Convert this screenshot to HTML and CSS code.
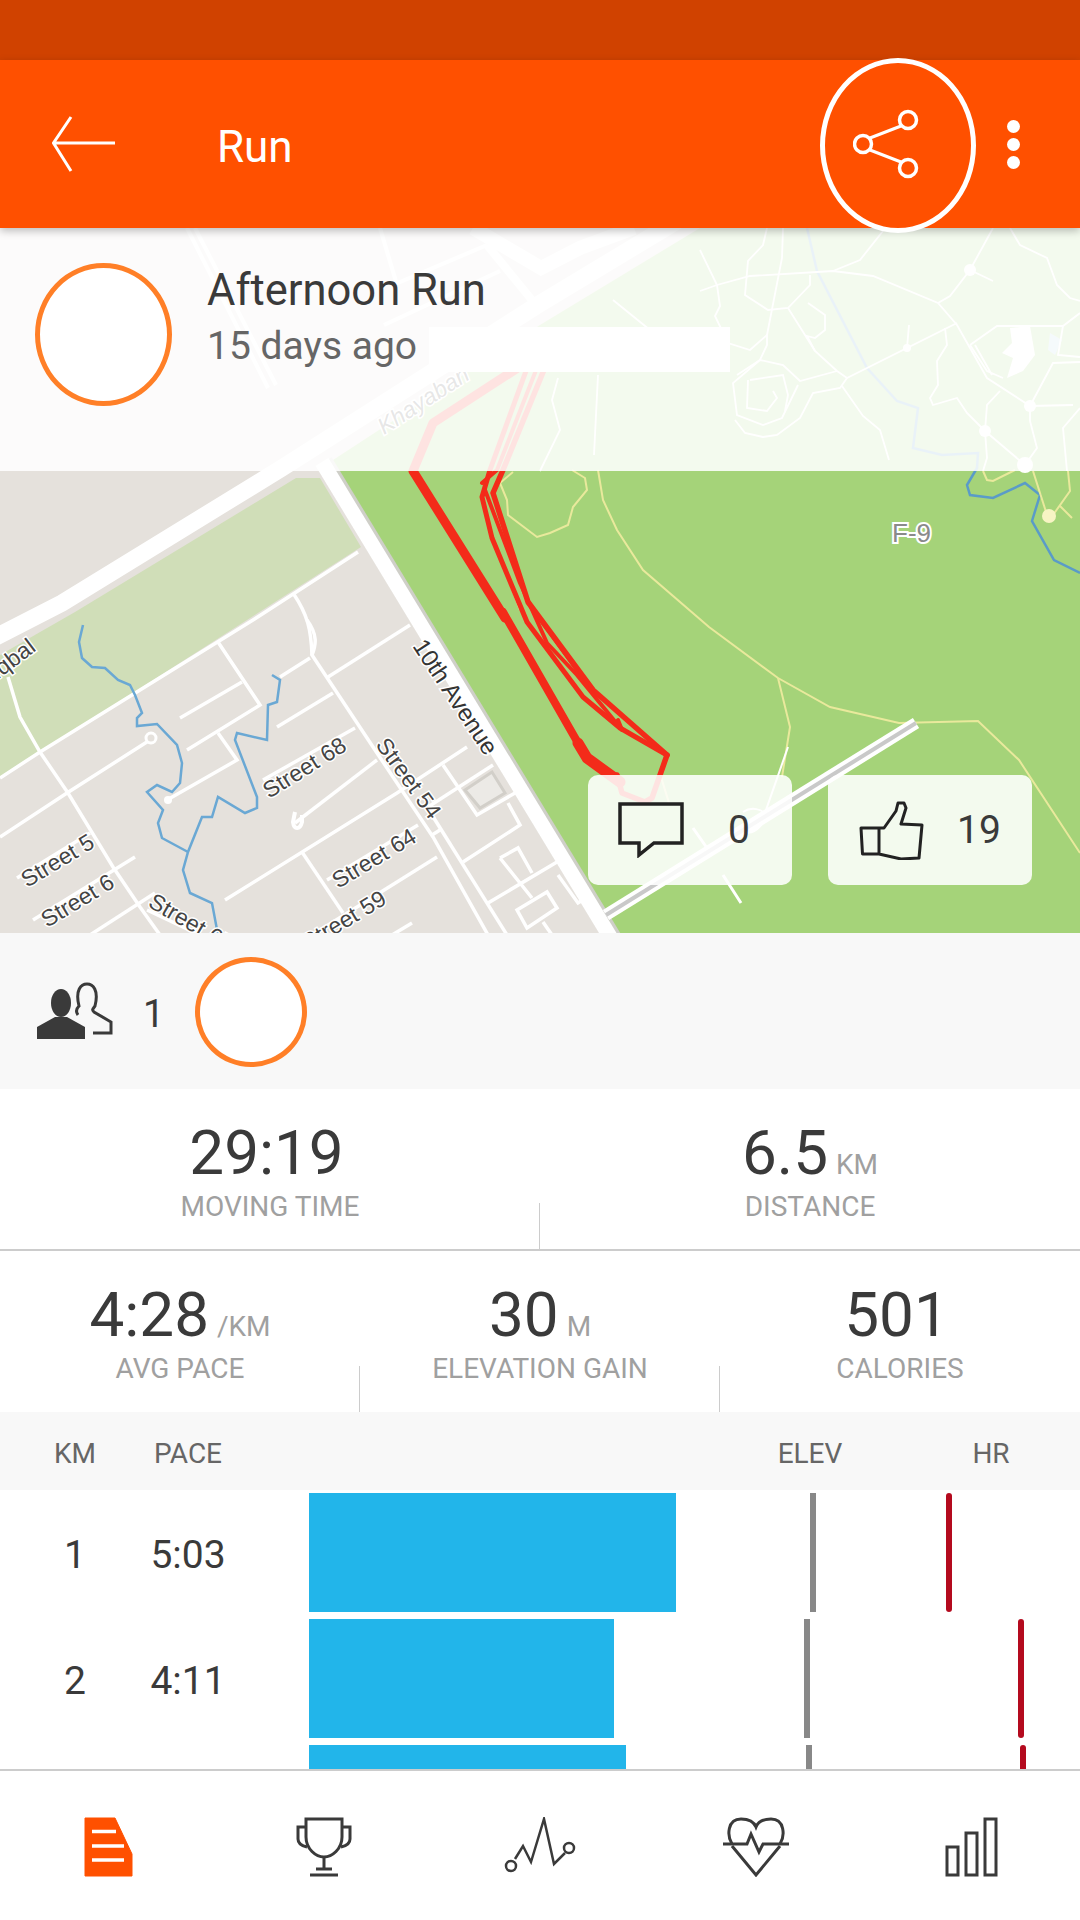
FILE: index.html
```html
<!DOCTYPE html>
<html>
  <head>
    <title>Run</title>
    <link rel="stylesheet" href="styles.css">
  </head>
  <body>
    <div class="status-bar"></div>

    <header class="app-bar">
      <svg class="back-icon" width="64" height="56" viewBox="0 0 64 56">
        <path d="M63 27H2M19 1 1.500 27 19 55" fill="none" stroke="#fff" stroke-width="3"/>
      </svg>
      <h1 class="app-title">Run</h1>
      <svg class="share-icon" width="66" height="70" viewBox="0 0 66 70">
        <g fill="none" stroke="#fff" stroke-width="3.500">
          <circle cx="55" cy="11" r="8.500"/>
          <circle cx="10" cy="35" r="8.500"/>
          <circle cx="55" cy="59" r="8.500"/>
          <path d="M17 29 48 17M17 41 48 53" stroke-width="3"/>
        </g>
      </svg>
      <div class="more-dots"><i></i><i></i><i></i></div>
      <div class="share-ring"></div>
    </header>

    <section class="map-wrap">
      <svg class="map" width="1080" height="705" viewBox="0 228 1080 705">
        <rect x="0" y="228" width="1080" height="705" fill="#e5e1dc"/>
        <polygon points="700,228 1080,228 1080,933 612,933 330,462 540,325" fill="#a5d379"/>
        <polygon points="0,655 75,612 296,478 320,478 361,547 0,778" fill="#d0deb8"/>

        <!-- big roads -->
        <g fill="none" stroke-linecap="butt">
          <path d="M324 462 614 940" stroke="#cfcfc8" stroke-width="18"/>
          <path d="M322 462 612 940" stroke="#fff" stroke-width="15"/>
          <path d="M-10 640 62 603 282 468 536 306 720 195" stroke="#fff" stroke-width="17"/>
          <path d="M473 228 541 268 580 248 634 228" stroke="#fff" stroke-width="14"/>
          <path d="M487 245 536 305" stroke="#fff" stroke-width="8"/>
        </g>

        <!-- faint streets under the card -->
        <g fill="none" stroke="#fff" stroke-width="4">
          <path d="M187 228 268 388M195 228 276 385"/>
          <path d="M380 228 397 285M487 245 393 285M500 271 384 325"/>
        </g>

        <!-- residential streets -->
        <g fill="none" stroke="#fff" stroke-width="3.500">
          <path d="M0 778 40 752 253 620 358 552"/>
          <path d="M8 677 20 717 40 752 68 793 113 867 140 907 160 935"/>
          <path d="M0 837 67 793 150 740"/>
          <path d="M187 750 260 705 218 642"/>
          <path d="M180 718 242 682"/>
          <path d="M280 677 310 658"/>
          <path d="M277 727 333 693"/>
          <path d="M167 800 237 760 218 733"/>
          <path d="M263 780 355 728"/>
          <path d="M295 823 377 760"/>
          <path d="M225 900 397 793 467 747"/>
          <path d="M302 852 343 913"/>
          <path d="M17 878 90 833"/>
          <path d="M33 920 135 857"/>
          <path d="M90 935 155 893"/>
          <path d="M147 910 200 935"/>
          <path d="M307 620C318 635 316 645 312 655L377 753 433 837 488 935"/>
          <path d="M293 593C308 615 311 630 312 655"/>
          <path d="M328 677 410 625"/>
          <path d="M327 880 418 825"/>
          <path d="M317 932 437 857"/>
          <path d="M432 815 507 935"/>
          <path d="M443 765 477 815 515 793"/>
          <path d="M428 807 493 765"/>
          <path d="M508 803 520 825 463 862"/>
          <path d="M432 835 440 830"/>
          <path d="M500 858 518 848 532 873M500 858 520 883 532 898"/>
          <path d="M488 903 557 862"/>
          <path d="M517 910 547 892 557 908 527 928Z"/>
          <path d="M543 922 552 935"/>
          <path d="M558 875 578 903 586 898 566 870"/>
          <path d="M392 935 412 923"/>
        </g>
        <polygon points="465,790 492,772 505,793 480,808" fill="#eceae6" stroke="#d2cfc9" stroke-width="3"/>
        <circle cx="151" cy="738" r="5" fill="#e5e1dc" stroke="#fff" stroke-width="3"/>
        <circle cx="168" cy="800" r="4" fill="#fff"/>
        <path d="M295 812 293 822C294 830 300 830 302 822V815" fill="none" stroke="#fff" stroke-width="4"/>

        <!-- rivers -->
        <g fill="none" stroke="#6aa8d4" stroke-width="2.500">
          <path d="M83 625 79 642 82 658 92 667 105 668 118 680 130 685 135 695 142 713 137 718 137 726 157 724 177 745 182 763 180 783 172 792 157 785 147 792 163 810 158 823 162 838 188 852"/>
          <path d="M272 675 280 680 277 702 268 705 267 740 237 733 235 740 257 797 257 808 245 813 218 797 212 817 202 817 188 852 183 870 190 893 212 903 218 935"/>
          <path d="M807 228 817 271 867 368 897 401 918 408 913 448 942 455 978 453 977 468 967 485 970 495 993 498 1025 483 1040 495 1032 521 1054 560 1080 573" stroke="#5a9bc8"/>
        </g>
        <path d="M1050 333 1062 340 1055 355 1048 350Z" fill="#b4d5e6"/>

        <!-- park trails, pale under the card -->
        <g fill="none" stroke="#fff" stroke-width="1.800">
          <path d="M700 291 717 285 750 276 833 271 873 276 938 303 957 325 987 378 1030 406"/>
          <path d="M700 250 717 285 720 306 715 316 728 343 750 350 767 335 767 345 760 360 737 375"/>
          <path d="M783 228 782 258 767 335"/>
          <path d="M767 228 763 245 748 261 745 295 768 310 788 308 810 285 810 275"/>
          <path d="M788 308 815 351 837 371 847 378 907 348 957 323"/>
          <path d="M808 303 825 315 825 330 815 338 807 336 815 351"/>
          <path d="M837 371 800 381 783 365 760 360 733 383 737 415 763 425 782 418 798 385"/>
          <path d="M748 380 747 408 767 411 777 398 773 391M750 380 783 375 788 395 785 411"/>
          <path d="M735 420 745 433 763 437 777 435 800 418 813 393 840 388 847 378"/>
          <path d="M842 386 863 416 880 430 889 460"/>
          <path d="M909 325 907 348"/>
          <path d="M833 271 860 260 883 231"/>
          <path d="M938 303 950 296 970 270 993 228M970 270 993 281"/>
          <path d="M1010 228 1020 245 1047 258 1057 285 1070 298 1080 301"/>
          <path d="M970 345 997 326 1063 326 1080 313M1063 326 1058 355 1080 357"/>
          <path d="M970 345 987 371 1003 378M975 345 992 375"/>
          <path d="M1030 406 1073 405M1030 406 1053 363 1080 362M1030 406 1030 421 1037 448 1025 465"/>
          <path d="M1000 391 987 405 985 431 1025 465M985 431 987 458 983 471"/>
          <path d="M945 328 947 345 937 361 938 385 930 398 933 405 957 398 967 413 985 431"/>
          <path d="M1067 471 1063 428 1080 408"/>
          <path d="M598 375 594 455M558 378 552 400 560 430 540 471M613 300 650 330"/>
        </g>
        <path d="M1010 328 1030 326 1035 355 1023 371 1007 378 1013 358 1002 353 1012 343Z" fill="#fff"/>
        <g fill="#fff">
          <circle cx="907" cy="348" r="4"/>
          <circle cx="970" cy="270" r="6"/>
          <circle cx="1030" cy="406" r="6"/>
          <circle cx="985" cy="431" r="6"/>
          <circle cx="1025" cy="465" r="8"/>
        </g>

        <!-- yellow trails in the open park -->
        <g fill="none" stroke="#e9e99c" stroke-width="2">
          <path d="M598 470 603 500 617 530 643 570 709 627 778 678 830 707 899 723 978 721 1019 760 1080 853"/>
          <path d="M778 678 790 727 782 777"/>
          <path d="M513 472 500 483 507 500 508 515 537 537 550 533 568 525 573 507 587 490 585 478 572 470"/>
          <path d="M497 550 520 610"/>
          <path d="M666 757 661 777 669 803"/>
          <path d="M983 471 987 480 993 481 1015 470"/>
          <path d="M1033 471 1047 515M1068 471 1070 491 1053 515M1060 506 1072 518"/>
        </g>
        <g fill="none" stroke="#fff" stroke-width="2">
          <path d="M788 747 766 810"/>
          <path d="M743 812C752 806 762 810 764 813 768 820 756 835 745 832"/>
        </g>
        <circle cx="1049" cy="516" r="7" fill="#f7f4c4"/>

        <!-- path across the park -->
        <g fill="none">
          <path d="M916 723 606 915" stroke="#fff" stroke-width="12"/>
          <path d="M916 723 606 915" stroke="#c9c9c9" stroke-width="4"/>
          <path d="M693 828 707 848M723 875 741 903" stroke="#fff" stroke-width="3"/>
        </g>

        <!-- route -->
        <g fill="none" stroke="#f32b1a" stroke-linejoin="round" stroke-linecap="round">
          <path d="M530 360 433 423 413 471 505 618" stroke-width="9"/>
          <path d="M503 612 578 743" stroke-width="8"/>
          <path d="M578 743 587 758 620 782" stroke-width="11"/>
          <path d="M617 775 622 793 645 802 652 798 667 755" stroke-width="5.500"/>
          <path d="M667 755 593 690 528 602 493 493 503 470 548 360" stroke-width="5.500"/>
          <path d="M667 755 620 728 583 697 527 622 492 538 482 497 490 470 530 360" stroke-width="5"/>
          <path d="M485 490 520 583 547 643 577 675 622 730 618 720M482 483 497 470 540 360" stroke-width="4"/>
          <path d="M528 602 577 670" stroke-width="4"/>
        </g>

        <!-- labels -->
        <g class="map-label">
          <text x="37" y="650" text-anchor="end" transform="rotate(-37 37 650)">Iqbal</text>
          <text class="big-label" x="412" y="646" transform="rotate(56.500 412 646)">10th Avenue</text>
          <text x="269" y="799" transform="rotate(-32 269 799)">Street 68</text>
          <text x="375" y="745" transform="rotate(54 375 745)">Street 54</text>
          <text x="338" y="889" transform="rotate(-31 338 889)">Street 64</text>
          <text x="27" y="888" transform="rotate(-31 27 888)">Street 5</text>
          <text x="47" y="928" transform="rotate(-31 47 928)">Street 6</text>
          <text x="308" y="951" transform="rotate(-31 308 951)">Street 59</text>
          <text x="147" y="906" transform="rotate(30 147 906)">Street 67</text>
          <text x="384" y="435" transform="rotate(-33 384 435)" font-style="italic">Khayaban</text>
          <text x="892" y="542" class="park-label">F-9</text>
        </g>
      </svg>

      <div class="activity-card">
        <div class="avatar avatar-big"></div>
        <div class="activity-text">
          <div class="activity-name">Afternoon Run</div>
          <div class="activity-when">
            <span>15 days ago</span>
            <div class="blank-box"></div>
          </div>
        </div>
      </div>

      <div class="map-actions">
        <div class="action-btn">
          <svg width="66" height="56" viewBox="0 0 66 56">
            <path d="M2 2H64V41H36L21 53V41H2Z" fill="none" stroke="#222" stroke-width="3.500"/>
          </svg>
          <span class="action-count count-comments">0</span>
        </div>
        <div class="action-btn">
          <svg width="66" height="60" viewBox="0 0 66 60">
            <path d="M21 28H3L4.500 54H21ZM21 28H26L38 11 40 3H46L48 8 43 24 64 25 61 58 43 59 21 54" fill="none" stroke="#222" stroke-width="3" stroke-linejoin="round"/>
          </svg>
          <span class="action-count count-kudos">19</span>
        </div>
      </div>
    </section>

    <section class="group-strip">
      <svg class="people-icon" width="76" height="58" viewBox="0 0 76 58">
        <ellipse cx="24" cy="21" rx="10" ry="14" fill="#3a3a3a"/>
        <path d="M0 57V45L18 35H30L48 45V57Z" fill="#3a3a3a"/>
        <path d="M41 33C38 29 40 26 42 24 38 8 44 2 50 2S62 8 58 24C55 28 55 28 57 30L74 40V51H56" fill="none" stroke="#3a3a3a" stroke-width="3"/>
      </svg>
      <span class="group-count">1</span>
      <div class="avatar avatar-small"></div>
    </section>

    <section class="stats-row stats-two">
      <div class="stat">
        <div class="stat-value stat-bare">29:19</div>
        <div class="stat-label">MOVING TIME</div>
      </div>
      <div class="stat stat-tick">
        <div class="stat-value">6.5<span class="stat-unit">KM</span></div>
        <div class="stat-label">DISTANCE</div>
      </div>
    </section>

    <section class="stats-row stats-three">
      <div class="stat">
        <div class="stat-value">4:28<span class="stat-unit">/KM</span></div>
        <div class="stat-label">AVG PACE</div>
      </div>
      <div class="stat stat-tick">
        <div class="stat-value">30<span class="stat-unit">M</span></div>
        <div class="stat-label">ELEVATION GAIN</div>
      </div>
      <div class="stat stat-tick">
        <div class="stat-value stat-bare">501</div>
        <div class="stat-label">CALORIES</div>
      </div>
    </section>

    <section class="splits">
      <div class="splits-head">
        <span class="col-km">KM</span>
        <span class="col-pace">PACE</span>
        <span class="col-elev">ELEV</span>
        <span class="col-hr">HR</span>
      </div>
      <div class="split-row">
        <span class="col-km">1</span>
        <span class="col-pace">5:03</span>
        <div class="chart">
          <div class="bar" style="width: 367px"></div>
          <div class="elev-mark" style="left: 501px"></div>
          <div class="hr-mark" style="left: 637px"></div>
        </div>
      </div>
      <div class="split-row">
        <span class="col-km">2</span>
        <span class="col-pace">4:11</span>
        <div class="chart">
          <div class="bar" style="width: 305px"></div>
          <div class="elev-mark" style="left: 495px"></div>
          <div class="hr-mark" style="left: 709px"></div>
        </div>
      </div>
      <div class="split-row">
        <span class="col-km">3</span>
        <span class="col-pace">4:17</span>
        <div class="chart">
          <div class="bar" style="width: 317px"></div>
          <div class="elev-mark" style="left: 497px"></div>
          <div class="hr-mark" style="left: 711px"></div>
        </div>
      </div>
    </section>

    <nav class="tab-bar">
      <div class="tab">
        <svg width="50" height="60" viewBox="0 0 50 60">
          <path d="M2 1H32L49 37V59H2Z" fill="#ff5000" stroke="#ff5000" stroke-width="1" stroke-linejoin="round"/>
          <path d="M9 14.500H33M9 29H41M9 43H41" stroke="#fff" stroke-width="3.500"/>
        </svg>
      </div>
      <div class="tab">
        <svg width="56" height="60" viewBox="0 0 56 60">
          <g fill="none" stroke="#3a3a3a" stroke-width="3">
            <path d="M10 2H46V20C46 32 36 40 28 40S10 32 10 20Z"/>
            <path d="M10 10H2V22C2 27 6 29 11 30M46 10H54V22C54 27 50 29 45 30"/>
            <path d="M28 40V52M20 52H36M14 58H42"/>
          </g>
        </svg>
      </div>
      <div class="tab">
        <svg width="72" height="56" viewBox="0 0 72 56">
          <g fill="none" stroke="#3a3a3a" stroke-width="2.500">
            <circle cx="7" cy="49" r="5"/>
            <circle cx="65" cy="31" r="5"/>
            <path d="M11 42 19 29 27 45 40 2 50 47 61 36"/>
          </g>
        </svg>
      </div>
      <div class="tab">
        <svg width="66" height="60" viewBox="0 0 66 60">
          <g fill="none" stroke="#3a3a3a" stroke-width="3">
            <path d="M9 27C4 19 4 2 18 2 26 2 31 5 33 10 35 5 40 2 48 2 62 2 62 19 57 27"/>
            <path d="M9 29 33 58 57 29"/>
            <path d="M0 27H24L28 17 36 35 40 27H66"/>
          </g>
        </svg>
      </div>
      <div class="tab">
        <svg width="54" height="60" viewBox="0 0 54 60">
          <g fill="none" stroke="#3a3a3a" stroke-width="3">
            <rect x="2" y="30" width="11" height="28"/>
            <rect x="21" y="16" width="11" height="42"/>
            <rect x="40" y="2" width="11" height="56"/>
          </g>
        </svg>
      </div>
    </nav>
  </body>
</html>
```

FILE: styles.css
```css
/* Activity detail screen */
* {
  box-sizing: border-box;
}
body {
  margin: 0;
  width: 1080px;
  height: 1920px;
  overflow: hidden;
  display: flex;
  flex-direction: column;
  background: #fff;
  color: #3a3a3a;
  font-family: Roboto, "Liberation Sans", sans-serif;
}

.status-bar {
  height: 60px;
  flex: none;
  background: #d04200;
}

/* orange bar */
.app-bar {
  position: relative;
  z-index: 2;
  height: 168px;
  flex: none;
  display: flex;
  align-items: center;
  padding-left: 52px;
  background: #ff5000;
  box-shadow: 0 3px 8px rgba(0, 0, 0, 0.25);
}
.back-icon {
  flex: none;
}
.app-title {
  margin: 0 0 -6px 101px;
  font-size: 44px;
  font-weight: 400;
  color: #fff;
}
.share-icon {
  margin-left: auto;
  flex: none;
}
.more-dots {
  flex: none;
  display: flex;
  flex-direction: column;
  gap: 5px;
  margin: 0 60px 0 88px;
}
.more-dots i {
  display: block;
  width: 13px;
  height: 13px;
  border-radius: 50%;
  background: #fff;
}
.share-ring {
  position: absolute;
  left: 820px;
  top: -2px;
  width: 156px;
  height: 175px;
  border: 5px solid #fff;
  border-radius: 50%;
}

/* map and what sits on it */
.map-wrap {
  position: relative;
  height: 705px;
  flex: none;
  overflow: hidden;
}
.map {
  display: block;
}
.map-label text {
  font-family: "Liberation Sans", sans-serif;
  font-size: 23px;
  fill: #444;
  stroke: #fff;
  stroke-width: 3px;
  paint-order: stroke;
}
.map-label .big-label {
  font-size: 24px;
  fill: #333;
}
.map-label .park-label {
  font-size: 26px;
  fill: #8a8a8a;
  stroke-width: 4px;
}
.activity-card {
  position: absolute;
  top: 0;
  left: 0;
  right: 0;
  height: 243px;
  display: flex;
  padding: 35px 0 0 35px;
  background: rgba(255, 255, 255, 0.87);
}
.avatar {
  flex: none;
  background: #fff;
  border-style: solid;
  border-color: #ff7f27;
  border-radius: 50%;
}
.avatar-big {
  width: 137px;
  height: 143px;
  border-width: 5px;
}
.activity-text {
  margin-left: 35px;
}
.activity-name {
  margin-top: 3px;
  font-size: 43.500px;
  line-height: 50px;
}
.activity-when {
  display: flex;
  align-items: flex-start;
  margin-top: 7px;
  font-size: 39px;
  color: #666;
}
.blank-box {
  width: 301px;
  height: 45px;
  margin: 4px 0 0 12px;
  background: #fff;
}
.map-actions {
  position: absolute;
  top: 547px;
  left: 588px;
  display: flex;
  gap: 36px;
}
.action-btn {
  position: relative;
  width: 204px;
  height: 110px;
  display: flex;
  align-items: center;
  padding-left: 30px;
  background: rgba(255, 255, 255, 0.87);
  border-radius: 10px;
}
.action-count {
  font-size: 39px;
}
.count-comments {
  margin-left: 44px;
}
.count-kudos {
  margin-left: 33px;
}

/* group row */
.group-strip {
  height: 156px;
  flex: none;
  display: flex;
  align-items: center;
  padding-left: 37px;
  background: #f8f8f8;
}
.people-icon {
  flex: none;
}
.group-count {
  margin: 5px 0 0 30px;
  font-size: 38px;
}
.avatar-small {
  width: 112px;
  height: 110px;
  margin: 2px 0 0 31px;
  border-width: 5px;
}

/* stats */
.stats-row {
  flex: none;
  display: grid;
}
.stats-two {
  grid-template-columns: 1fr 1fr;
  height: 162px;
  border-bottom: 2px solid #ccc;
}
.stats-three {
  grid-template-columns: 1fr 1fr 1fr;
  height: 161px;
}
.stat {
  position: relative;
  padding-top: 34px;
  text-align: center;
}
.stat-tick::before {
  content: "";
  position: absolute;
  left: -1px;
  bottom: 0;
  width: 1px;
  height: 46px;
  background: #ccc;
}
.stat-value {
  font-size: 62px;
  line-height: 60px;
}
.stat-bare {
  padding-right: 7px;
}
.stat-unit {
  margin-left: 8px;
  font-size: 28px;
  line-height: 1;
  color: #a0a0a0;
}
.stat-label {
  margin-top: 8px;
  font-size: 28px;
  line-height: 32px;
  color: #a0a0a0;
}

/* splits table */
.splits {
  flex: 1;
  min-height: 0;
  overflow: hidden;
}
.splits-head {
  height: 78px;
  display: flex;
  align-items: center;
  margin-bottom: 3px;
  padding-top: 4px;
  background: #f8f8f8;
  font-size: 28px;
  color: #666;
}
.col-km {
  flex: none;
  width: 150px;
  text-align: center;
}
.col-pace {
  flex: none;
  width: 76px;
  text-align: center;
  white-space: nowrap;
}
.col-elev {
  flex: none;
  width: 140px;
  margin-left: 514px;
  text-align: center;
}
.col-hr {
  flex: none;
  width: 142px;
  margin-left: 40px;
  text-align: center;
}
.split-row {
  height: 119px;
  display: flex;
  align-items: center;
  margin-bottom: 7px;
  font-size: 39px;
}
.split-row .col-km,
.split-row .col-pace {
  padding-top: 5px;
}
.chart {
  position: relative;
  flex: 1;
  height: 100%;
  margin-left: 83px;
}
.bar {
  height: 100%;
  background: #22b5ea;
}
.elev-mark {
  position: absolute;
  top: 0;
  bottom: 0;
  width: 6px;
  background: #888;
}
.hr-mark {
  position: absolute;
  top: 0;
  bottom: 0;
  width: 6px;
  background: #b40a1e;
  border-radius: 3px;
}

/* bottom tabs */
.tab-bar {
  height: 151px;
  flex: none;
  display: flex;
  border-top: 2px solid #ccc;
  background: #fff;
}
.tab {
  flex: 1;
  display: flex;
  justify-content: center;
  padding-top: 46px;
}
.tab svg {
  display: block;
}
```
